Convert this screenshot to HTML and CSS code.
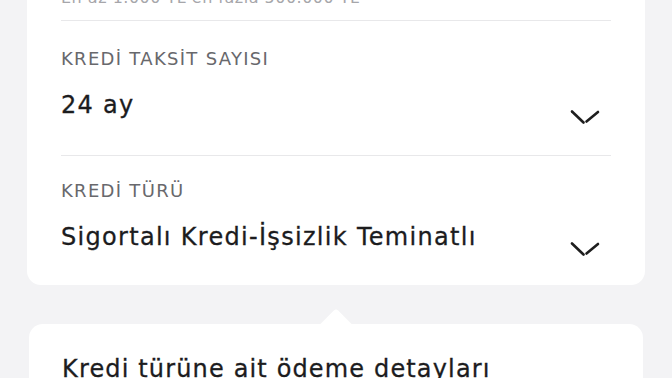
FILE: index.html
```html
<!DOCTYPE html>
<html lang="tr">
<head>
    <meta charset="utf-8"/>
    <meta name="viewport" content="width=device-width, initial-scale=1"/>
    <link rel="stylesheet" href="styles.css">
</head>
<body>

    <div class="screen">
        <div class="card">
            <p class="hint">En az 1.000 TL en fazla 500.000 TL</p>

            <div class="field">
                <div class="label">KREDİ TAKSİT SAYISI</div>
                <div class="select-row">
                    <span class="value">24 ay</span>
                    <svg class="chevron" viewBox="0 0 30 16" width="30" height="16">
                        <path d="M2 2.5 L13.5 13.5"/>
                        <path d="M16.5 12.5 L28 3"/>
                    </svg>
                </div>
            </div>

            <div class="field">
                <div class="label">KREDİ TÜRÜ</div>
                <div class="select-row">
                    <span class="value">Sigortalı Kredi-İşsizlik Teminatlı</span>
                    <svg class="chevron" viewBox="0 0 30 16" width="30" height="16">
                        <path d="M2 2.5 L13.5 13.5"/>
                        <path d="M16.5 12.5 L28 3"/>
                    </svg>
                </div>
            </div>
        </div>

        <div class="card details">
            <h2 class="details-title">Kredi türüne ait ödeme detayları</h2>
        </div>
    </div>

</body>
</html>
```

FILE: styles.css
```css
/* sayfa zaten biraz kaydırılmış halde */

body {
    margin: 0;
    background-color: #f3f3f5;
    font-family: "DejaVu Sans", "Noto Sans", sans-serif;
    color: #1c1c1e;
}

.screen {
    margin-top: -12px;
    padding: 0 27px;
}

.card {
    background-color: #fff;
    border-radius: 0 0 14px 14px;
    padding: 0 34px;
}

.hint {
    margin: 0;
    padding-bottom: 12px;
    font-size: 16px;
    line-height: 20px;
    letter-spacing: 0.5px;
    color: #a6a6aa;
}

.field {
    border-top: 1px solid #e8e8ea;
    padding: 28px 0 29px;
}

.field:last-child {
    padding: 25px 0 27px;
}

.label {
    font-size: 18px;
    line-height: 20px;
    letter-spacing: 1.3px;
    color: #68686c;
}

.select-row {
    display: flex;
    justify-content: space-between;
    align-items: flex-start;
    margin-top: 21px;
    height: 36px;
}

.value {
    font-size: 24px;
    line-height: 30px;
    letter-spacing: 1.3px;
    -webkit-text-stroke: 0.3px #1c1c1e;
}

.chevron {
    margin-top: 19px;
    margin-right: 11px;
    fill: none;
    stroke: #1e1e1e;
    stroke-width: 2.6;
    stroke-linecap: round;
}

.details {
    position: relative;
    margin: 39px 2px 0;
    border-radius: 14px;
    padding: 30px 33px 30px;
}

/* küçük ok, üstteki karta işaret ediyor */
.details::before {
    content: "";
    position: absolute;
    top: -11px;
    left: 296px;
    width: 22px;
    height: 22px;
    background-color: #fff;
    border-radius: 3px 0 0 0;
    transform: rotate(45deg);
}

.details-title {
    margin: 0;
    font-size: 24px;
    line-height: 30px;
    letter-spacing: 1.15px;
    font-weight: normal;
    -webkit-text-stroke: 0.3px #1c1c1e;
}
```
